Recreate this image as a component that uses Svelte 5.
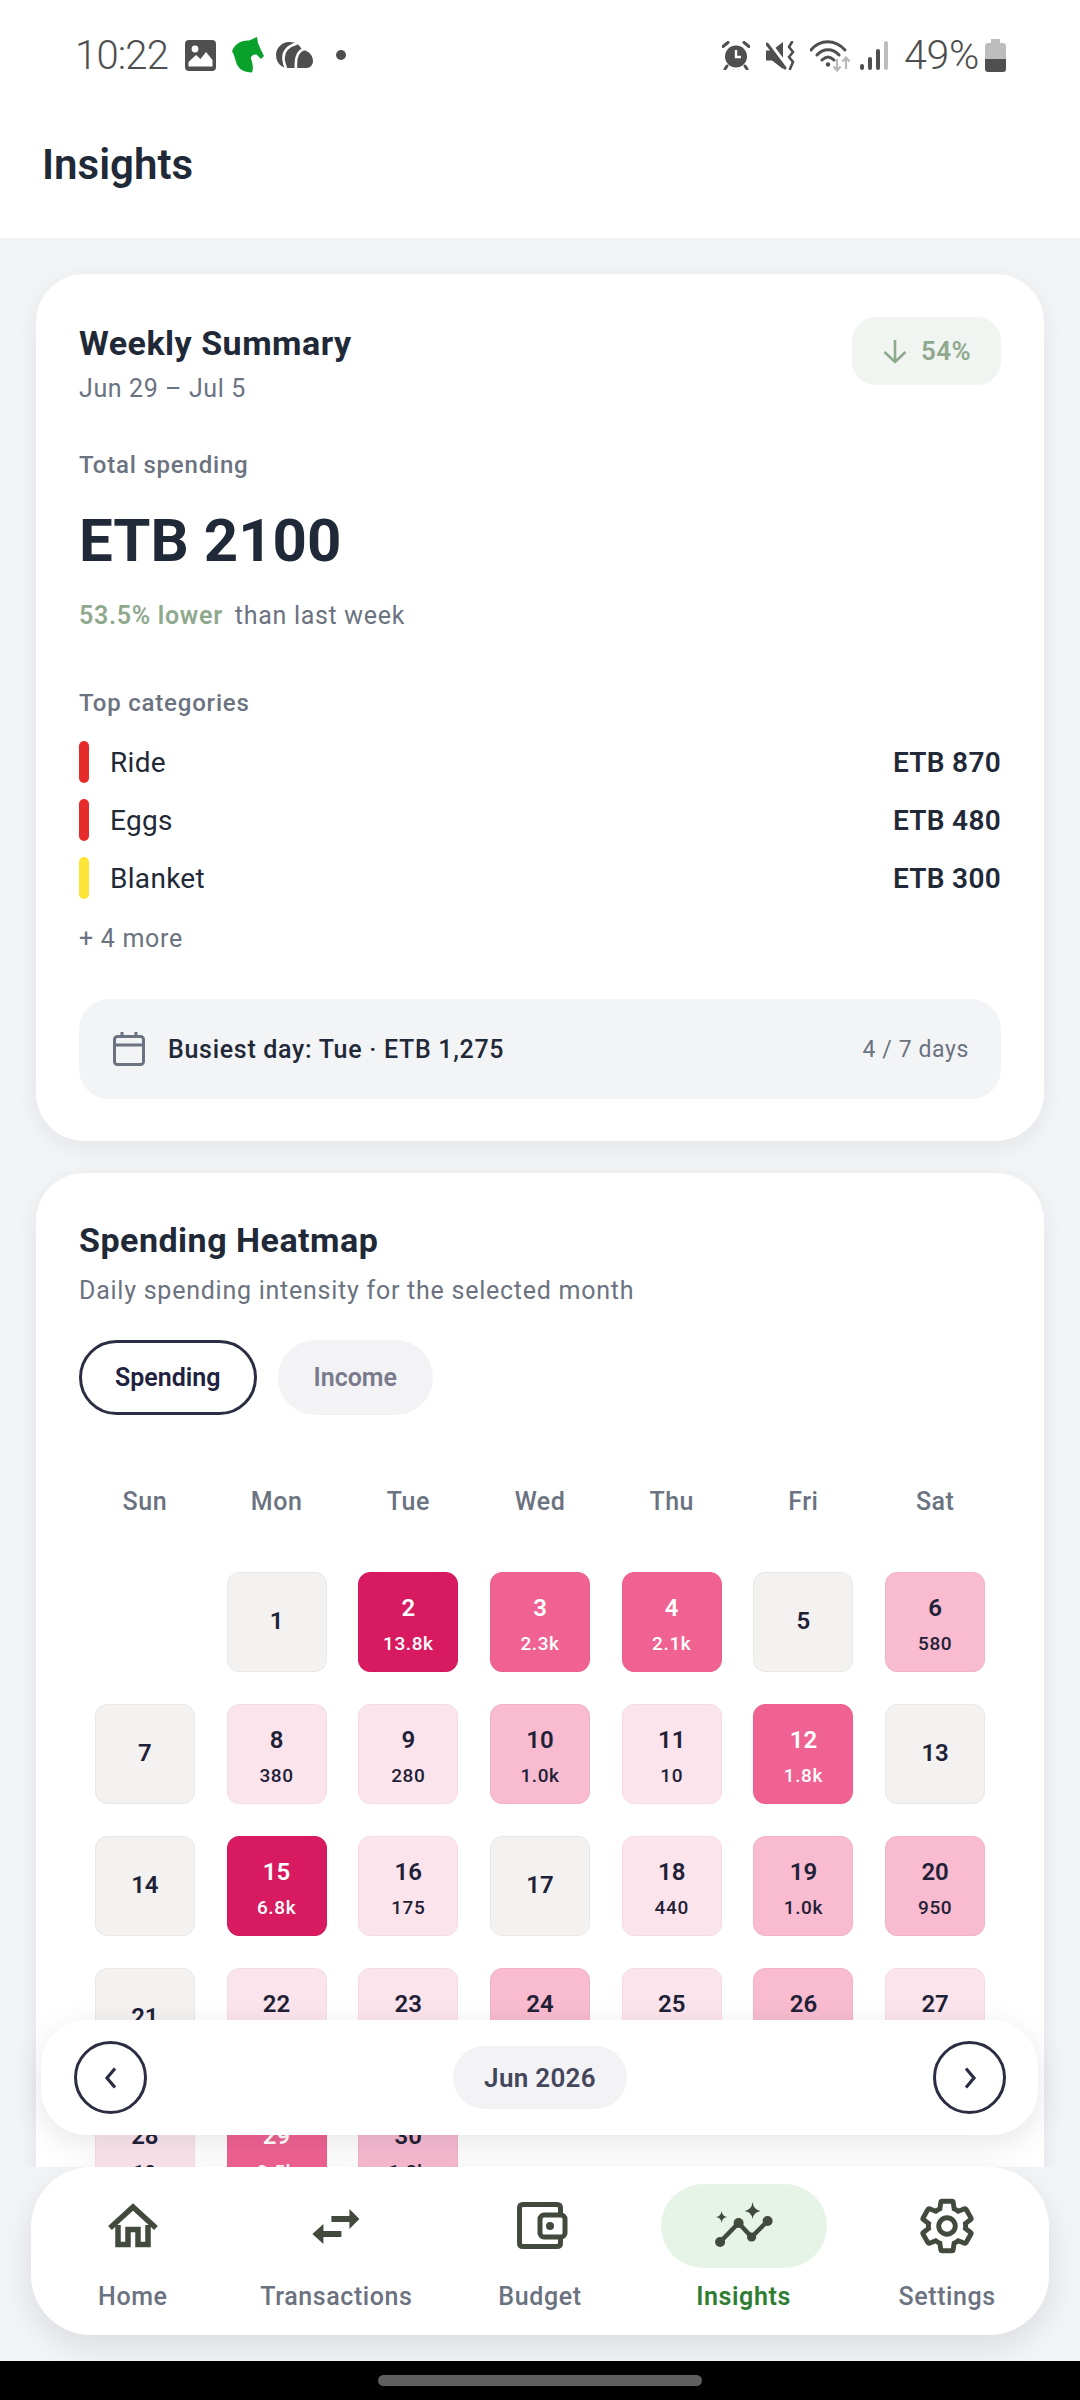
<script>
  const tones = { n: 'neutral', l: 'light', m: 'mid', s: 'strong', d: 'deep' };
  const days = [
    null,
    { d: 1, t: 'n' }, { d: 2, v: '13.8k', t: 'd' }, { d: 3, v: '2.3k', t: 's' }, { d: 4, v: '2.1k', t: 's' }, { d: 5, t: 'n' }, { d: 6, v: '580', t: 'm' },
    { d: 7, t: 'n' }, { d: 8, v: '380', t: 'l' }, { d: 9, v: '280', t: 'l' }, { d: 10, v: '1.0k', t: 'm' }, { d: 11, v: '10', t: 'l' }, { d: 12, v: '1.8k', t: 's' }, { d: 13, t: 'n' },
    { d: 14, t: 'n' }, { d: 15, v: '6.8k', t: 'd' }, { d: 16, v: '175', t: 'l' }, { d: 17, t: 'n' }, { d: 18, v: '440', t: 'l' }, { d: 19, v: '1.0k', t: 'm' }, { d: 20, v: '950', t: 'm' },
    { d: 21, t: 'n' }, { d: 22, v: '300', t: 'l' }, { d: 23, v: '250', t: 'l' }, { d: 24, v: '1.0k', t: 'm' }, { d: 25, v: '200', t: 'l' }, { d: 26, v: '1.1k', t: 'm' }, { d: 27, v: '150', t: 'l' },
    { d: 28, v: '10', t: 'l' }, { d: 29, v: '9.5k', t: 's' }, { d: 30, v: '1.2k', t: 'm' }
  ];
  const weekdays = ['Sun', 'Mon', 'Tue', 'Wed', 'Thu', 'Fri', 'Sat'];
  const cats = [
    { n: 'Ride', a: 'ETB 870', c: '#e82a2a' },
    { n: 'Eggs', a: 'ETB 480', c: '#e82a2a' },
    { n: 'Blanket', a: 'ETB 300', c: '#fde536' }
  ];
</script>

<div class="screen">
  <div class="status">
    <div class="status-left">
      <span class="clock">10:22</span>
      <svg class="s-img" width="31" height="31" viewBox="0 0 31 31"><rect width="31" height="31" rx="4" fill="#4f4f4f"/><circle cx="10" cy="9" r="3.4" fill="#fff"/><path d="M3.5 26.5 V22 L11 15 L15.5 19 L21 12 L27.5 20 V26.5Z" fill="#fff"/></svg>
      <svg class="s-horse" width="32" height="36" viewBox="0 0 32 36"><path d="M0 14 C3 7 9 3 17 3.5 L25 0 L26 6 C28 11 30 15 32 19 L29 22 L24.5 17.5 C21.5 17 18.5 19 19 22 C21 27 21.5 32 20 35.5 C12 35.5 6 32 4 25 C3 21 2 18 0 14Z" fill="#09a02b"/></svg>
      <svg class="s-cloud" width="37" height="26" viewBox="0 0 37 26"><path d="M13 0 C20 0 24 3 26 8 C32 8 37 13 37 19 C37 23 34 26 31 26 H12 C5 26 0 20 0 13 C0 6 6 0 13 0Z" fill="#4f4f4f"/><path d="M21 1.5 C12 4 7 9 7.5 17 C7.7 20 8.5 23 10 26 M28 7 C22 9 19 14 20 26" stroke="#fff" stroke-width="2.6" fill="none"/></svg>
      <span class="s-dot"></span>
    </div>
    <div class="status-right">
      <svg class="s-alarm" width="28" height="29" viewBox="0 0 28 29"><circle cx="14" cy="15.5" r="11" fill="#4f4f4f"/><path d="M14 9 V16 H19" stroke="#fff" stroke-width="2.4" fill="none"/><path d="M1 5.5 L6 1.5 M27 5.5 L22 1.5 M5 25 L3 28 M23 25 L25 28" stroke="#4f4f4f" stroke-width="3" stroke-linecap="round"/></svg>
      <svg class="s-mute" width="29" height="29" viewBox="0 0 29 29"><path d="M0 9.5 H6 L17 1 V28 L6 19.5 H0Z" fill="#4f4f4f"/><path d="M2 1 L20 25" stroke="#fff" stroke-width="5"/><path d="M1 3 L19 27" stroke="#4f4f4f" stroke-width="3" stroke-linecap="round"/><path d="M26 1 L23 6 L27 11 L23 16 L27 21 L24 28" stroke="#4f4f4f" stroke-width="2.6" fill="none" stroke-linecap="round"/></svg>
      <svg class="s-wifi" width="41" height="32" viewBox="0 0 41 32"><path d="M1 10 C10 -1 25 -1 35 10 M7 15 C13 8 23 8 29 15 M12 20 C16 16 20 16 24 20" stroke="#4f4f4f" stroke-width="3" fill="none" stroke-linecap="round"/><circle cx="18" cy="24.5" r="2.2" fill="#4f4f4f"/><path d="M27 19 V30 M23.5 26.5 L27 30.5 L30.5 26.5 M36 29 V18 M32.5 21.5 L36 17.5 L39.5 21.5" stroke="#b9b9b9" stroke-width="2.2" fill="none"/></svg>
      <svg class="s-signal" width="28" height="29" viewBox="0 0 28 29"><rect x="0" y="23" width="4" height="6" rx="2" fill="#4f4f4f"/><rect x="8" y="16" width="4" height="13" rx="2" fill="#4f4f4f"/><rect x="16" y="8" width="4" height="21" rx="2" fill="#4f4f4f"/><rect x="24" y="0" width="4" height="29" rx="2" fill="#bdbdbd"/></svg>
      <span class="pct">49%</span>
      <svg class="s-batt" width="21" height="33" viewBox="0 0 21 33"><path d="M6 0 H15 V4 H18 Q21 4 21 7 V20 H0 V7 Q0 4 3 4 H6Z" fill="#bdbdbd"/><path d="M0 20 H21 V30 Q21 33 18 33 H3 Q0 33 0 30Z" fill="#4f4f4f"/></svg>
    </div>
  </div>

  <header class="header"><h1>Insights</h1></header>

  <main class="content">
    <section class="card summary">
      <div class="sum-head">
        <div>
          <h2>Weekly Summary</h2>
          <p class="range">Jun 29 – Jul 5</p>
        </div>
        <div class="badge">
          <svg width="26" height="26" viewBox="0 0 26 26"><path d="M13 2 V24 M2.5 14 L13 24 L23.5 14" stroke="#8fa98f" stroke-width="2.6" fill="none"/></svg>
          <span>54%</span>
        </div>
      </div>
      <p class="label total-label">Total spending</p>
      <p class="total">ETB 2100</p>
      <p class="delta"><b>53.5% lower</b><span>than last week</span></p>
      <p class="label cat-label">Top categories</p>
      <ul class="cats">
        {#each cats as c}
          <li>
            <i style="background:{c.c}"></i>
            <span class="cname">{c.n}</span>
            <span class="camt">{c.a}</span>
          </li>
        {/each}
      </ul>
      <p class="more">+ 4 more</p>
      <div class="busy">
        <svg width="32" height="34" viewBox="0 0 32 34"><rect x="1.5" y="4.5" width="29" height="28" rx="3" stroke="#6b7280" stroke-width="3" fill="none"/><path d="M1.5 13 H30.5 M9 0 V5 M23 0 V5" stroke="#6b7280" stroke-width="3"/></svg>
        <span class="busy-t">Busiest day: Tue · ETB 1,275</span>
        <span class="busy-d">4 / 7 days</span>
      </div>
    </section>

    <section class="card heat">
      <h2>Spending Heatmap</h2>
      <p class="heat-sub">Daily spending intensity for the selected month</p>
      <div class="toggles">
        <span class="tog on">Spending</span>
        <span class="tog">Income</span>
      </div>
      <div class="grid weekdays">
        {#each weekdays as w}<span>{w}</span>{/each}
      </div>
      <div class="grid cells">
        {#each days as c}
          <div class="slot">
            {#if c}
              <div class="cell {tones[c.t]}" class:has-sub={c.v}>
                <b>{c.d}</b>
                {#if c.v}<small>{c.v}</small>{/if}
              </div>
            {/if}
          </div>
        {/each}
      </div>
    </section>

    <div class="monthbar">
      <span class="round">
        <svg width="24" height="24" viewBox="0 0 24 24"><path d="M16 2.5 L8 12 L16 21.5" stroke="#2b2d42" stroke-width="3.2" fill="none"/></svg>
      </span>
      <span class="month">Jun 2026</span>
      <span class="round">
        <svg width="24" height="24" viewBox="0 0 24 24"><path d="M8 2.5 L16 12 L8 21.5" stroke="#2b2d42" stroke-width="3.2" fill="none"/></svg>
      </span>
    </div>
  </main>

  <div class="navarea">
    <nav class="nav">
      <div class="item">
        <span class="pill">
          <svg width="70" height="70" viewBox="98 2192 70 70"><path d="M110 2229 L133 2208 L156 2229" stroke="#414a3d" stroke-width="5.5" fill="none"/><path d="M118 2226 V2245.5 H128 V2230.5 H138 V2245.5 H148 V2226" stroke="#414a3d" stroke-width="5.5" fill="none"/></svg>
        </span>
        <span class="lab">Home</span>
      </div>
      <div class="item">
        <span class="pill">
          <svg width="70" height="70" viewBox="301.6 2192 70 70"><path d="M332 2217 H350 V2210 L360 2220 L350 2230 V2223 H332Z M342 2232 H324 V2225 L313 2235 L324 2245 V2238 H342Z" fill="#414a3d"/></svg>
        </span>
        <span class="lab">Transactions</span>
      </div>
      <div class="item">
        <span class="pill">
          <svg width="70" height="70" viewBox="505 2192 70 70"><path d="M560.5 2216 V2209 Q560.5 2205.5 557 2205.5 H523 Q519.5 2205.5 519.5 2209 V2244 Q519.5 2247.5 523 2247.5 H557 Q560.5 2247.5 560.5 2244 V2238" stroke="#414a3d" stroke-width="5" fill="none"/><rect x="540" y="2216" width="25" height="22" rx="4" stroke="#414a3d" stroke-width="5" fill="#fff"/><circle cx="550" cy="2227" r="4" fill="#414a3d"/></svg>
        </span>
        <span class="lab">Budget</span>
      </div>
      <div class="item active">
        <span class="pill">
          <svg width="70" height="70" viewBox="708.4 2192 70 70"><path d="M719.5 2243 L738 2224 L751 2238 L767 2222" stroke="#414a3d" stroke-width="4.5" fill="none"/><circle cx="719.5" cy="2243" r="5" fill="#414a3d"/><circle cx="738" cy="2224" r="5" fill="#414a3d"/><circle cx="751" cy="2238" r="4.6" fill="#414a3d"/><circle cx="767" cy="2222" r="5" fill="#414a3d"/><path d="M752 2203 Q753 2211 760 2212 Q753 2213 752 2220 Q751 2213 744 2212 Q751 2211 752 2203Z M721 2212 Q721.5 2217.5 727 2218 Q721.5 2218.5 721 2224 Q720.5 2218.5 715 2218 Q720.5 2217.5 721 2212Z" fill="#414a3d"/></svg>
        </span>
        <span class="lab">Insights</span>
      </div>
      <div class="item">
        <span class="pill">
          <svg width="62" height="62" viewBox="0 0 24 24"><path d="M19.14 12.94c.04-.3.06-.61.06-.94 0-.32-.02-.64-.07-.94l2.03-1.58c.18-.14.23-.41.12-.61l-1.92-3.32c-.12-.22-.37-.29-.59-.22l-2.39.96c-.5-.38-1.03-.7-1.62-.94l-.36-2.54c-.04-.24-.24-.41-.48-.41h-3.84c-.24 0-.43.17-.47.41l-.36 2.54c-.59.24-1.13.57-1.62.94l-2.39-.96c-.22-.08-.47 0-.59.22L2.74 8.87c-.12.21-.08.47.12.61l2.03 1.58c-.05.3-.09.63-.09.94s.02.64.07.94l-2.03 1.58c-.18.14-.23.41-.12.61l1.92 3.32c.12.22.37.29.59.22l2.39-.96c.5.38 1.03.7 1.62.94l.36 2.54c.05.24.24.41.48.41h3.84c.24 0 .44-.17.47-.41l.36-2.54c.59-.24 1.13-.56 1.62-.94l2.39.96c.22.08.47 0 .59-.22l1.92-3.32c.12-.22.07-.47-.12-.61l-2.01-1.58z" fill="none" stroke="#414a3d" stroke-width="1.9"/><circle cx="12" cy="12" r="3.2" fill="none" stroke="#414a3d" stroke-width="1.9"/></svg>
        </span>
        <span class="lab">Settings</span>
      </div>
    </nav>
  </div>

  <div class="sysbar"><span></span></div>
</div>

<style>
  :global(body) { margin: 0; background: #fff; }
  * { box-sizing: border-box; }
  h1, h2, p, ul { margin: 0; padding: 0; }
  .screen {
    width: 1080px; height: 2400px; display: flex; flex-direction: column; overflow: hidden;
    font-family: Roboto, "Noto Sans", sans-serif; background: #f3f4f6; color: #1f2937;
  }

  .status { height: 110px; flex: none; background: #fff; display: flex; justify-content: space-between; align-items: center; padding: 0 74px 0 75px; color: #4f4f4f; }
  .status-left, .status-right { display: flex; align-items: center; }
  .clock { font-size: 40px; font-weight: 300; width: 110px; letter-spacing: -.8px; }
  .s-horse { margin-left: 16px; }
  .s-cloud { margin-left: 12px; }
  .s-dot { width: 10px; height: 10px; border-radius: 50%; background: #4f4f4f; margin-left: 23px; }
  .s-mute { margin-left: 16px; }
  .s-wifi { margin-left: 15px; margin-top: 2px; }
  .s-signal { margin-left: 9px; }
  .pct { font-size: 41px; font-weight: 300; margin-left: 16px; width: 81px; letter-spacing: -.3px; }

  .header { height: 128px; flex: none; background: #fff; padding: 32px 42px 0; }
  h1 { font-size: 42px; font-weight: 600; line-height: 46px; }

  .content { position: relative; height: 1929px; flex: none; overflow: hidden; padding: 36px; }
  .card { background: #fff; border-radius: 48px; padding: 42px 43px; box-shadow: 0 6px 24px rgba(17, 24, 39, .07); }
  .summary { height: 867px; }
  .heat { margin-top: 32px; height: 1300px; }
  h2 { font-size: 34px; font-weight: 700; line-height: 40px; letter-spacing: .5px; }

  .sum-head { display: flex; justify-content: space-between; align-items: flex-start; }
  .sum-head h2 { margin-top: 7px; }
  .range { font-size: 25px; color: #6b7280; line-height: 32px; margin-top: 10px; letter-spacing: .6px; }
  .badge { width: 149px; height: 68px; margin-top: 1px; border-radius: 24px; background: #f1f5f1; display: flex; align-items: center; justify-content: center; gap: 13px; color: #8fa98f; font-size: 26px; font-weight: 600; letter-spacing: .3px; }
  .label { font-size: 24px; font-weight: 500; color: #6b7280; letter-spacing: .8px; line-height: 30px; }
  .total-label { margin-top: 45px; }
  .total { font-size: 60px; font-weight: 700; line-height: 70px; margin-top: 26px; }
  .delta { display: flex; gap: 12px; margin-top: 23px; font-size: 25px; line-height: 34px; color: #6b7280; letter-spacing: .7px; }
  .delta b { color: #8fa98f; font-weight: 600; }
  .cat-label { margin-top: 55px; }
  .cats { list-style: none; margin-top: 23px; display: flex; flex-direction: column; gap: 16px; }
  .cats li { display: flex; align-items: center; height: 42px; }
  .cats i { width: 10px; height: 42px; border-radius: 5px; }
  .cname { margin-left: 21px; font-size: 28px; color: #1f2937; letter-spacing: .3px; }
  .camt { margin-left: auto; font-size: 28px; font-weight: 600; letter-spacing: .3px; }
  .more { margin-top: 23px; font-size: 25px; color: #6b7280; line-height: 34px; letter-spacing: .7px; }
  .busy { margin-top: 43px; height: 100px; border-radius: 30px; background: #f3f4f6; display: flex; align-items: center; padding: 0 32px 0 34px; }
  .busy-t { margin-left: 23px; font-size: 25px; font-weight: 500; letter-spacing: .7px; }
  .busy-d { margin-left: auto; font-size: 23px; color: #6b7280; letter-spacing: .6px; }

  .heat h2 { margin-top: 5px; }
  .heat-sub { font-size: 25px; color: #6b7280; line-height: 34px; margin-top: 14px; letter-spacing: .75px; }
  .toggles { display: flex; gap: 21px; margin-top: 32px; }
  .tog { height: 75px; border-radius: 38px; padding: 0 36px; background: #f3f3f6; color: #7a7a8c; font-size: 25px; font-weight: 600; display: flex; align-items: center; }
  .tog.on { background: #fff; border: 3px solid #2b2d42; color: #1f2140; padding: 0 33px; }
  .grid { display: grid; grid-template-columns: repeat(7, 1fr); }
  .weekdays { margin-top: 69px; text-align: center; font-size: 25px; font-weight: 500; color: #6b7280; line-height: 36px; letter-spacing: .5px; }
  .cells { margin-top: 52px; grid-auto-rows: 132px; }
  .slot { display: flex; justify-content: center; align-items: flex-start; }
  .cell { width: 100px; height: 100px; border-radius: 12px; border: 1.5px solid; display: flex; flex-direction: column; align-items: center; justify-content: center; color: #1f2137; padding-bottom: 2px; }
  .cell.has-sub { padding: 4px 0 0; }
  .cell b { font-size: 24px; font-weight: 600; line-height: 30px; }
  .cell small { font-size: 19px; font-weight: 500; line-height: 24px; margin-top: 9px; letter-spacing: .6px; }
  .neutral { background: #f4f1f1; border-color: #ebe7e7; }
  .light { background: #fbe4ec; border-color: #f5dbe4; }
  .mid { background: #f8bbd0; border-color: #f2b3c8; }
  .strong { background: #f06292; border-color: #ee5f8f; color: #fff; }
  .deep { background: #d81b60; border-color: #d31a5d; color: #fff; }

  .monthbar { position: absolute; left: 41px; width: 997px; top: 1782px; height: 115px; border-radius: 46px; background: #fff; box-shadow: 0 8px 30px rgba(17, 24, 39, .1); display: flex; align-items: center; justify-content: space-between; padding: 0 32px 0 33px; }
  .round { width: 73px; height: 73px; border: 3px solid #2b2d42; border-radius: 50%; display: flex; align-items: center; justify-content: center; background: #fff; }
  .month { height: 63px; width: 174px; border-radius: 32px; background: #f3f3f6; display: flex; align-items: center; justify-content: center; font-size: 26px; font-weight: 600; color: #44465c; letter-spacing: .3px; }

  .navarea { flex: 1; position: relative; padding: 0 31px; }
  .nav { height: 168px; border-radius: 60px; background: #fff; box-shadow: 0 12px 32px rgba(17, 24, 39, .1); display: flex; position: relative; z-index: 2; }
  .item { flex: 1; display: flex; flex-direction: column; align-items: center; padding-top: 17px; color: #6b7280; }
  .pill { width: 166px; height: 84px; border-radius: 42px; display: flex; align-items: center; justify-content: center; }
  .active .pill { background: #e6f4e8; }
  .lab { margin-top: 13px; font-size: 25px; font-weight: 500; line-height: 32px; letter-spacing: .6px; }
  .active .lab { color: #2e7d32; font-weight: 600; }

  .sysbar { height: 39px; flex: none; background: #000; display: flex; justify-content: center; padding-top: 14px; position: relative; z-index: 3; }
  .sysbar span { width: 324px; height: 11px; border-radius: 6px; background: #5f5f5f; }
</style>
